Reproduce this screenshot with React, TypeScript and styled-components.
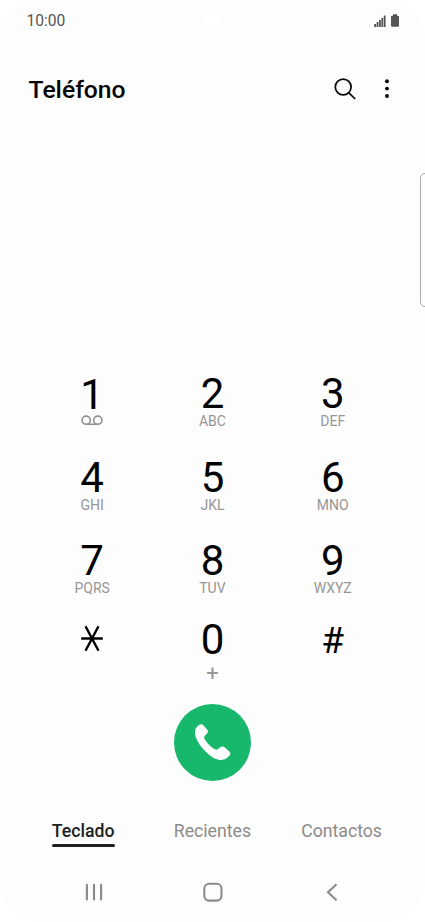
import React from "react";
import styled, { createGlobalStyle } from "styled-components";

const GlobalStyle = createGlobalStyle`
  * { box-sizing: border-box; }
  body { margin: 0; background: #fff; font-family: Roboto, "Noto Sans", sans-serif; }
  button { border: 0; padding: 0; margin: 0; background: none; font: inherit; color: inherit; }
  svg { display: block; }
`;

const Screen = styled.div`
  position: relative;
  width: 425px;
  height: 922px;
  display: flex;
  flex-direction: column;
  overflow: hidden;
  background: #fdfdfd;
  border-radius: 40px;
`;

const StatusBar = styled.header`
  display: flex;
  align-items: center;
  justify-content: space-between;
  height: 41px;
  padding: 0 25px 0 26.4px;
`;

const Clock = styled.time`
  font-size: 15.6px;
  line-height: 20px;
  color: #555;
`;

const Camera = styled.span`
  position: absolute;
  top: 13px;
  left: 205px;
  width: 14px;
  height: 14px;
  border-radius: 50%;
  background: #fff;
`;

const TitleBar = styled.div`
  display: flex;
  align-items: center;
  height: 97px;
  padding: 0 32px 0 28.5px;
`;

const Title = styled.h1`
  flex: 1;
  margin: 0;
  font-size: 24.7px;
  line-height: 30px;
  font-weight: 500;
  color: #050505;
`;

const IconButton = styled.button<{ $width: number }>`
  display: flex;
  justify-content: center;
  width: ${(p) => p.$width}px;
  padding-bottom: 1px;
`;

const EdgeHandle = styled.div`
  position: absolute;
  top: 173px;
  right: -6px;
  width: 11px;
  height: 134px;
  border: 1px solid #ababab;
  border-radius: 5px;
`;

const Keypad = styled.main`
  display: grid;
  grid-template-columns: repeat(3, 120.3px);
  grid-template-rows: 83.5px 83.5px 79px 83.5px;
  margin: 235px 0 0 32px;
`;

const Key = styled.button`
  display: flex;
  flex-direction: column;
  align-items: center;
`;

const Digit = styled.span<{ $drop?: boolean; $small?: boolean }>`
  display: flex;
  align-items: center;
  height: 42px;
  padding-top: ${(p) => (p.$drop ? 2 : 0)}px;
  font-size: ${(p) => (p.$small ? 37 : 42)}px;
  line-height: ${(p) => (p.$small ? 37 : 42)}px;
  color: #030303;
`;

const Letters = styled.span<{ $plus?: boolean }>`
  margin-top: ${(p) => (p.$plus ? 4 : -2.6)}px;
  font-size: ${(p) => (p.$plus ? 22 : 14)}px;
  line-height: 18px;
  color: #969696;
`;

const VoicemailSlot = styled.span`
  margin-top: -0.4px;
`;

const CallRow = styled.div`
  display: flex;
  justify-content: center;
  margin-top: 1px;
`;

const CallButton = styled.button`
  display: flex;
  align-items: center;
  justify-content: center;
  width: 77px;
  height: 77px;
  padding: 0 2px 1px 0;
  border-radius: 50%;
  background: #17b86c;
`;

const Tabs = styled.nav`
  display: grid;
  grid-template-columns: repeat(3, 129.2px);
  justify-items: center;
  margin: 38px 0 0 18.6px;
`;

const Tab = styled.button<{ $active?: boolean }>`
  display: flex;
  flex-direction: column;
  height: 28px;
  font-size: 17.7px;
  line-height: 25px;
  font-weight: ${(p) => (p.$active ? 500 : 400)};
  color: ${(p) => (p.$active ? "#202222" : "#8b8b8b")};
`;

const Underline = styled.span`
  flex: none;
  width: 100%;
  height: 3px;
  border-radius: 2px;
  background: #202222;
`;

const SystemNav = styled.footer`
  display: grid;
  grid-template-columns: repeat(3, 119px);
  justify-items: center;
  align-items: center;
  height: 22px;
  margin: 34px 0 0 34px;
`;

const SignalIcon = () => (
  <svg width="12" height="12" viewBox="0 0 12 12" fill="#555">
    <rect x="0.2" y="9" width="1.8" height="3" />
    <rect x="2.6" y="7" width="1.8" height="5" />
    <rect x="5" y="5" width="1.8" height="7" />
    <rect x="7.4" y="2.8" width="1.8" height="9.2" />
    <rect x="9.8" y="0.5" width="1.8" height="11.5" />
  </svg>
);

const BatteryIcon = () => (
  <svg width="10" height="13" viewBox="0 0 10 13" fill="#555">
    <path d="M3 .3h4v1.500h.8q1.200 0 1.200 1.200v8.600q0 1.200-1.200 1.200H2.200Q1 12.800 1 11.600V3q0-1.200 1.200-1.200H3z" />
  </svg>
);

const Indicators = styled.div`
  display: flex;
  align-items: center;
  gap: 4px;
`;

const SearchIcon = () => (
  <svg width="24" height="24" viewBox="0 0 24 24" fill="none" stroke="#080808" strokeWidth="1.75" strokeLinecap="round">
    <circle cx="10.2" cy="10" r="7.9" />
    <path d="M15.9 15.8 21.7 21.5" />
  </svg>
);

const MoreIcon = () => (
  <svg width="6" height="22" viewBox="0 0 6 22" fill="#080808">
    <circle cx="3" cy="3.2" r="1.95" />
    <circle cx="3" cy="10.6" r="1.95" />
    <circle cx="3" cy="18" r="1.95" />
  </svg>
);

const VoicemailIcon = () => (
  <svg width="22" height="12" viewBox="0 0 22 12" fill="none" stroke="#929292" strokeWidth="1.6">
    <circle cx="5.2" cy="5.2" r="4.1" />
    <circle cx="16.8" cy="5.2" r="4.1" />
    <path d="M5.2 9.3h11.6" />
  </svg>
);

const StarIcon = () => (
  <svg width="24" height="30" viewBox="0 0 24 30" fill="none" stroke="#030303" strokeWidth="2.4">
    <path d="M1.2 13.500h21.600M5.500 1.300l13 24.400M18.500 1.300 5.500 25.700" />
  </svg>
);

const HandsetIcon = () => (
  <svg width="38" height="38" viewBox="0 0 38 38" fill="#fff">
    <path d="M7 1.600C5.300 2.600 3.700 3.900 2.800 5.600C.4 10.300 3.300 18 9.500 25.300C15 31.700 21 36.400 26.800 37C29 37.200 31.200 36.800 33 35.600C34.700 34.500 36.300 33 37.100 31.500C37.700 30.300 37.200 29.500 36.300 28.600L31.800 24.400C30.500 23.300 29 23.200 27.500 24.100C25.600 25.200 25 27.100 22.700 26.600C19 25.500 12.500 18.700 11.200 15C10.700 13.200 12.400 12.300 13.800 10.800C15.300 9.300 15.400 8.400 14.500 7L10.300 2.200C9.300 1.100 8.200 .9 7 1.600Z" />
  </svg>
);

const RecentsIcon = () => (
  <svg width="20" height="20" viewBox="0 0 20 20" stroke="#8c8c8c" strokeWidth="2.2" strokeLinecap="round">
    <path d="M2.900 2.900v14.600M10 2.900v14.600M17.100 2.900v14.600" />
  </svg>
);

const HomeIcon = () => (
  <svg width="22" height="22" viewBox="0 0 22 22" fill="none" stroke="#8c8c8c" strokeWidth="2.1">
    <rect x="2.300" y="2.800" width="17.200" height="16.800" rx="4.800" />
  </svg>
);

const BackIcon = () => (
  <svg width="20" height="20" viewBox="0 0 20 20" fill="none" stroke="#8c8c8c" strokeWidth="2.1">
    <path d="M14.500 2.200 6 10.200l8.500 8" />
  </svg>
);

const keys: { digit: string; letters?: string }[] = [
  { digit: "1" },
  { digit: "2", letters: "ABC" },
  { digit: "3", letters: "DEF" },
  { digit: "4", letters: "GHI" },
  { digit: "5", letters: "JKL" },
  { digit: "6", letters: "MNO" },
  { digit: "7", letters: "PQRS" },
  { digit: "8", letters: "TUV" },
  { digit: "9", letters: "WXYZ" },
  { digit: "*" },
  { digit: "0", letters: "+" },
  { digit: "#" },
];

export default function App() {
  return (
    <>
      <GlobalStyle />
      <Screen>
        <StatusBar>
          <Clock>10:00</Clock>
          <Indicators>
            <SignalIcon />
            <BatteryIcon />
          </Indicators>
        </StatusBar>
        <Camera />
        <TitleBar>
          <Title>Teléfono</Title>
          <IconButton $width={72} aria-label="Buscar"><SearchIcon /></IconButton>
          <IconButton $width={12} aria-label="Más opciones"><MoreIcon /></IconButton>
        </TitleBar>
        <EdgeHandle />
        <Keypad>
          {keys.map(({ digit, letters }) => (
            <Key key={digit}>
              <Digit $drop={digit === "1"} $small={digit === "#"}>
                {digit === "*" ? <StarIcon /> : digit}
              </Digit>
              {digit === "1" && <VoicemailSlot><VoicemailIcon /></VoicemailSlot>}
              {letters && <Letters $plus={letters === "+"}>{letters}</Letters>}
            </Key>
          ))}
        </Keypad>
        <CallRow>
          <CallButton aria-label="Llamar"><HandsetIcon /></CallButton>
        </CallRow>
        <Tabs>
          <Tab $active>Teclado<Underline /></Tab>
          <Tab>Recientes</Tab>
          <Tab>Contactos</Tab>
        </Tabs>
        <SystemNav>
          <RecentsIcon />
          <HomeIcon />
          <BackIcon />
        </SystemNav>
      </Screen>
    </>
  );
}
